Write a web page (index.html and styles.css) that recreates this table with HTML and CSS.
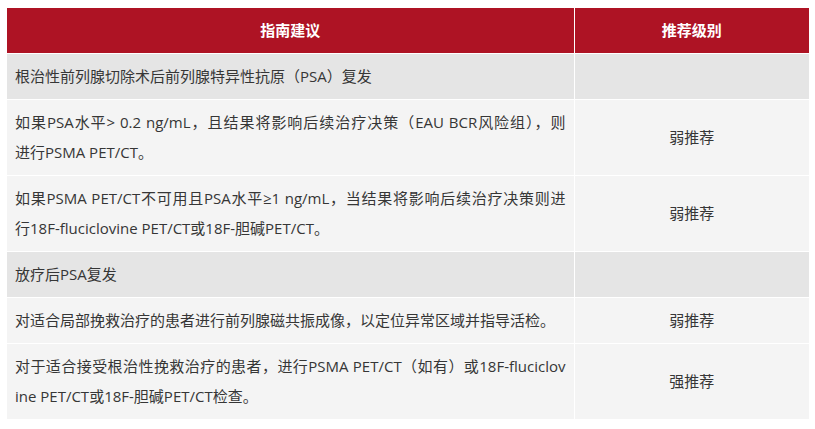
FILE: index.html
```html
<!DOCTYPE html>
<html lang="zh-CN">
<head>
<meta charset="utf-8">
<link rel="stylesheet" href="styles.css">
</head>
<body>
<table class="guide">
  <colgroup>
    <col class="col-main">
    <col class="col-level">
  </colgroup>
  <thead>
    <tr>
      <th>指南建议</th>
      <th>推荐级别</th>
    </tr>
  </thead>
  <tbody>
    <tr class="section">
      <td>根治性前列腺切除术后前列腺特异性抗原（PSA）复发</td>
      <td></td>
    </tr>
    <tr>
      <td><span class="jl">如果PSA水平&gt; 0.2 ng/mL，且结果将影响后续治疗决策（EAU BCR风险组），则</span>进行PSMA PET/CT。</td>
      <td class="level">弱推荐</td>
    </tr>
    <tr>
      <td><span class="jl">如果PSMA PET/CT不可用且PSA水平≥1 ng/mL，当结果将影响后续治疗决策则进</span>行18F-fluciclovine PET/CT或18F-胆碱PET/CT。</td>
      <td class="level">弱推荐</td>
    </tr>
    <tr class="section">
      <td>放疗后PSA复发</td>
      <td></td>
    </tr>
    <tr>
      <td>对适合局部挽救治疗的患者进行前列腺磁共振成像，以定位异常区域并指导活检。</td>
      <td class="level">弱推荐</td>
    </tr>
    <tr>
      <td><span class="jl">对于适合接受根治性挽救治疗的患者，进行PSMA PET/CT（如有）或18F-fluciclov</span>ine PET/CT或18F-胆碱PET/CT检查。</td>
      <td class="level">强推荐</td>
    </tr>
  </tbody>
</table>
</body>
</html>
```

FILE: styles.css
```css
html, body {
  margin: 0;
  padding: 0;
  background: #ffffff;
}

body {
  padding: 8px 6px 0 7px;
  font-family: "Open Sans", "Noto Sans CJK SC", sans-serif;
  font-size: 15px;
  color: #363636;
}

.guide {
  width: 802px;
  border-collapse: collapse;
  table-layout: fixed;
}

.col-main { width: 567px; }
.col-level { width: 235px; }

.guide th,
.guide td {
  border: 1px solid #ffffff;
  padding: 7px 8px 8px;
  line-height: 30px;
  word-break: break-all;
  vertical-align: middle;
}

.guide tr > :first-child { border-left: 0; }
.guide tr > :last-child { border-right: 0; }
.guide thead th { border-top: 0; }
.guide tbody tr:last-child td { border-bottom: 0; }

.guide th {
  background: #ae1324;
  color: #ffffff;
  font-weight: 700;
  text-align: center;
  height: 30px;
}

.guide td {
  background: #f4f4f4;
  text-align: justify;
}

.guide tr.section td {
  background: #e5e5e5;
}

.guide td.level {
  text-align: center;
}

.jl {
  display: block;
  text-align: justify;
  text-align-last: justify;
  white-space: nowrap;
}
```
